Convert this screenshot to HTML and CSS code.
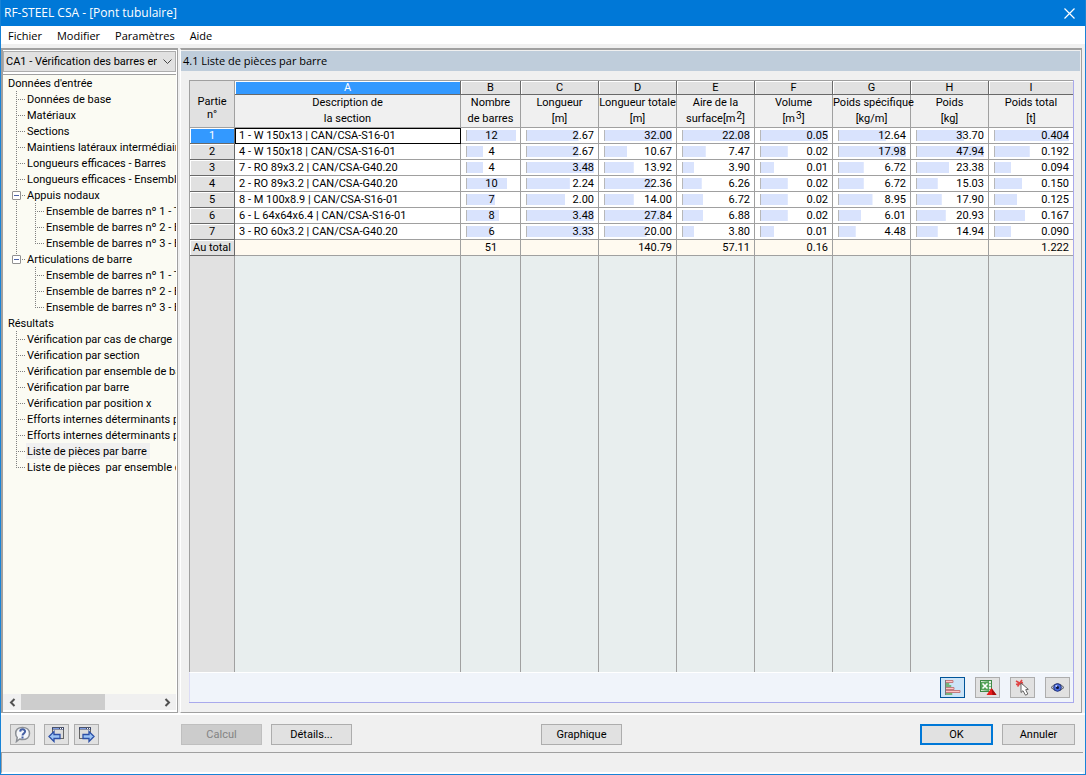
FILE: index.html
```html
<!DOCTYPE html>
<html lang="fr">
<head>
<meta charset="utf-8">
<title>RF-STEEL CSA - [Pont tubulaire]</title>
<link rel="stylesheet" href="styles.css">
</head>
<body>
<div class="window">
  <header class="titlebar">
    <h1 class="title">RF-STEEL CSA - [Pont tubulaire]</h1>
    <button class="close" type="button" aria-label="Fermer"><svg width="11" height="11" viewBox="0 0 11 11"><path d="M.5.5l10 10M10.500.5l-10 10" stroke="#fff" stroke-width="1.200" fill="none"/></svg></button>
  </header>
  <nav class="menubar">
    <button type="button">Fichier</button>
    <button type="button">Modifier</button>
    <button type="button">Paramètres</button>
    <button type="button">Aide</button>
  </nav>

  <div class="body">
    <aside class="sidebar">
      <select class="case" aria-label="Cas"><option>CA1 - Vérification des barres en acier</option></select>
      <div class="tree-box">
        <ul class="tree">
          <li><a href="#">Données d'entrée</a>
            <ul class="branch">
              <li><a href="#">Données de base</a></li>
              <li><a href="#">Matériaux</a></li>
              <li><a href="#">Sections</a></li>
              <li><a href="#">Maintiens latéraux intermédiaires</a></li>
              <li><a href="#">Longueurs efficaces - Barres</a></li>
              <li><a href="#">Longueurs efficaces - Ensembles de barres</a></li>
              <li><button class="expander" type="button" aria-label="Réduire"></button><a href="#">Appuis nodaux</a>
                <ul class="branch">
                  <li><a href="#">Ensemble de barres nº 1 - Treillis</a></li>
                  <li><a href="#">Ensemble de barres nº 2 - Ensemble</a></li>
                  <li><a href="#">Ensemble de barres nº 3 - Ensemble</a></li>
                </ul>
              </li>
              <li><button class="expander" type="button" aria-label="Réduire"></button><a href="#">Articulations de barre</a>
                <ul class="branch">
                  <li><a href="#">Ensemble de barres nº 1 - Treillis</a></li>
                  <li><a href="#">Ensemble de barres nº 2 - Ensemble</a></li>
                  <li><a href="#">Ensemble de barres nº 3 - Ensemble</a></li>
                </ul>
              </li>
            </ul>
          </li>
          <li><a href="#">Résultats</a>
            <ul class="branch">
              <li><a href="#">Vérification par cas de charge</a></li>
              <li><a href="#">Vérification par section</a></li>
              <li><a href="#">Vérification par ensemble de barres</a></li>
              <li><a href="#">Vérification par barre</a></li>
              <li><a href="#">Vérification par position x</a></li>
              <li><a href="#">Efforts internes déterminants par barre</a></li>
              <li><a href="#">Efforts internes déterminants par ensemble</a></li>
              <li><a href="#" class="selected">Liste de pièces par barre</a></li>
              <li><a href="#">Liste de pièces&nbsp; par ensemble de barres</a></li>
            </ul>
          </li>
        </ul>
        <div class="scrollbar">
          <button type="button" aria-label="Défiler à gauche"><svg width="7" height="9" viewBox="0 0 7 9"><path d="M5.500 1L2 4.500 5.500 8" stroke="#505050" stroke-width="2" fill="none"/></svg></button>
          <div class="track"><div class="thumb"></div></div>
          <button type="button" aria-label="Défiler à droite"><svg width="7" height="9" viewBox="0 0 7 9"><path d="M1.500 1L5 4.500 1.500 8" stroke="#505050" stroke-width="2" fill="none"/></svg></button>
        </div>
      </div>
    </aside>

    <main class="main">
      <h2 class="caption">4.1 Liste de pièces par barre</h2>
      <section class="grid">
        <div class="sheet">
          <table class="parts">
            <colgroup><col class="c-no"><col class="c-desc"><col class="c-count"><col class="c-num"><col class="c-num"><col class="c-num"><col class="c-num"><col class="c-num"><col class="c-num"><col></colgroup>
            <thead>
              <tr class="letters"><th rowspan="2" class="corner">Partie<br>n°</th><th class="active">A</th><th>B</th><th>C</th><th>D</th><th>E</th><th>F</th><th>G</th><th>H</th><th>I</th></tr>
              <tr class="names"><th>Description de<br>la section</th><th>Nombre<br>de barres</th><th>Longueur<br>[m]</th><th>Longueur totale<br>[m]</th><th>Aire de la<br>surface[m<sup>2</sup>]</th><th>Volume<br>[m<sup>3</sup>]</th><th>Poids spécifique<br>[kg/m]</th><th>Poids<br>[kg]</th><th>Poids total<br>[t]</th></tr>
            </thead>
            <tbody>
              <tr><th class="active">1</th><td class="desc focus">1 - W 150x13 | CAN/CSA-S16-01</td><td><div class="bar mid" style="--v:100%">12</div></td><td><div class="bar" style="--v:77%">2.67</div></td><td><div class="bar" style="--v:100%">32.00</div></td><td><div class="bar" style="--v:100%">22.08</div></td><td><div class="bar" style="--v:100%">0.05</div></td><td><div class="bar" style="--v:70%">12.64</div></td><td><div class="bar" style="--v:70%">33.70</div></td><td><div class="bar" style="--v:100%">0.404</div></td></tr>
              <tr><th>2</th><td class="desc">4 - W 150x18 | CAN/CSA-S16-01</td><td><div class="bar mid" style="--v:33%">4</div></td><td><div class="bar" style="--v:77%">2.67</div></td><td><div class="bar" style="--v:33%">10.67</div></td><td><div class="bar" style="--v:34%">7.47</div></td><td><div class="bar" style="--v:40%">0.02</div></td><td><div class="bar" style="--v:100%">17.98</div></td><td><div class="bar" style="--v:100%">47.94</div></td><td><div class="bar" style="--v:47%">0.192</div></td></tr>
              <tr><th>3</th><td class="desc">7 - RO 89x3.2 | CAN/CSA-G40.20</td><td><div class="bar mid" style="--v:33%">4</div></td><td><div class="bar" style="--v:100%">3.48</div></td><td><div class="bar" style="--v:43%">13.92</div></td><td><div class="bar" style="--v:17%">3.90</div></td><td><div class="bar" style="--v:20%">0.01</div></td><td><div class="bar" style="--v:37%">6.72</div></td><td><div class="bar" style="--v:48%">23.38</div></td><td><div class="bar" style="--v:22%">0.094</div></td></tr>
              <tr><th>4</th><td class="desc">2 - RO 89x3.2 | CAN/CSA-G40.20</td><td><div class="bar mid" style="--v:82%">10</div></td><td><div class="bar" style="--v:64%">2.24</div></td><td><div class="bar" style="--v:70%">22.36</div></td><td><div class="bar" style="--v:28%">6.26</div></td><td><div class="bar" style="--v:40%">0.02</div></td><td><div class="bar" style="--v:37%">6.72</div></td><td><div class="bar" style="--v:31%">15.03</div></td><td><div class="bar" style="--v:37%">0.150</div></td></tr>
              <tr><th>5</th><td class="desc">8 - M 100x8.9 | CAN/CSA-S16-01</td><td><div class="bar mid" style="--v:58%">7</div></td><td><div class="bar" style="--v:57%">2.00</div></td><td><div class="bar" style="--v:43%">14.00</div></td><td><div class="bar" style="--v:30%">6.72</div></td><td><div class="bar" style="--v:40%">0.02</div></td><td><div class="bar" style="--v:50%">8.95</div></td><td><div class="bar" style="--v:37%">17.90</div></td><td><div class="bar" style="--v:30%">0.125</div></td></tr>
              <tr><th>6</th><td class="desc">6 - L 64x64x6.4 | CAN/CSA-S16-01</td><td><div class="bar mid" style="--v:66%">8</div></td><td><div class="bar" style="--v:100%">3.48</div></td><td><div class="bar" style="--v:87%">27.84</div></td><td><div class="bar" style="--v:30%">6.88</div></td><td><div class="bar" style="--v:40%">0.02</div></td><td><div class="bar" style="--v:33%">6.01</div></td><td><div class="bar" style="--v:43%">20.93</div></td><td><div class="bar" style="--v:41%">0.167</div></td></tr>
              <tr><th>7</th><td class="desc">3 - RO 60x3.2 | CAN/CSA-G40.20</td><td><div class="bar mid" style="--v:50%">6</div></td><td><div class="bar" style="--v:95%">3.33</div></td><td><div class="bar" style="--v:62%">20.00</div></td><td><div class="bar" style="--v:17%">3.80</div></td><td><div class="bar" style="--v:20%">0.01</div></td><td><div class="bar" style="--v:25%">4.48</div></td><td><div class="bar" style="--v:31%">14.94</div></td><td><div class="bar" style="--v:22%">0.090</div></td></tr>
              <tr class="total"><th>Au total</th><td></td><td class="mid">51</td><td></td><td>140.79</td><td>57.11</td><td>0.16</td><td></td><td></td><td>1.222</td></tr>
              <tr class="filler"><th></th><td></td><td></td><td></td><td></td><td></td><td></td><td></td><td></td><td></td></tr>
            </tbody>
          </table>
        </div>
        <div class="tools">
          <button type="button" class="btn icon on" aria-label="Barres"><svg width="19" height="17" viewBox="0 0 19 17"><path d="M2.500 1v15" stroke="#777" fill="none"/><path d="M3 1.500h7v2H3M3 8.500h8v2H3M3 11.500h14v2H3" fill="#ffc4c4" stroke="#c27c80"/><path d="M3 4.500h3v1H3M3 6.500h5v1H3M3 14.500h6v1H3" fill="#c4f4c4" stroke="#74b47c"/></svg></button>
          <button type="button" class="btn icon" aria-label="Excel"><svg width="19" height="17" viewBox="0 0 19 17"><rect x="2.500" y="1.500" width="11" height="11" fill="#e4f0e2" stroke="#3f8a46"/><path d="M10 4.500h3M10 7.500h3M10 10.500h3" stroke="#7fb883"/><path d="M3 3l8-1v10l-8-1z" fill="#55a45a"/><path d="M4.500 4.500l5 5M9.500 4.500l-5 5" stroke="#fff" stroke-width="1.600"/><path d="M13.500 9l5 7h-10z" fill="#e81c1c"/><path d="M13.500 9l5 7h-4z" fill="#a80c0c"/></svg></button>
          <button type="button" class="btn icon" aria-label="Sélection"><svg width="19" height="17" viewBox="0 0 19 17"><path d="M3 2l7 4M9 1L4.500 7.500M3 5.500l7-2" stroke="#e04444" stroke-width="1.600"/><path d="M8 4v9.500l2-1.800 2.500 4.500 2.300-1.200-2.100-4.300 2.600-.4z" fill="#fff" stroke="#555" stroke-width=".9"/></svg></button>
          <button type="button" class="btn icon" aria-label="Afficher"><svg width="19" height="17" viewBox="0 0 19 17"><path d="M3 8.500Q9.500 1 16 8.500 9.500 15 3 8.500z" fill="#c4c8d0" stroke="#60646c"/><circle cx="9.500" cy="8.500" r="3.800" fill="#4668dc" stroke="#26367e"/><circle cx="9.500" cy="8.500" r="1.500" fill="#0c1234"/><circle cx="8.300" cy="7" r="1" fill="#c0d0ff"/></svg></button>
        </div>
      </section>
    </main>
  </div>

  <footer class="footer">
    <div class="nav">
      <button type="button" class="btn icon" aria-label="Aide"><svg width="19" height="17" viewBox="0 0 19 17"><path d="M9.500 1.500c4.300 0 7 2.500 7 6s-2.700 6-7 6c-1 0-2-.2-2.800-.5L3.500 15.500l.7-4C3.200 10.500 2.700 9 2.700 7.500c0-3.500 2.500-6 6.800-6z" fill="#f4f6fa" stroke="#8c9096" stroke-width="1.500"/><path d="M7.200 5.600c.1-3 5-3 4.900 0 0 1.800-2.600 1.800-2.600 4" fill="none" stroke="#4560a4" stroke-width="2"/><rect x="8.500" y="10.500" width="2" height="2" fill="#4560a4"/></svg></button>
      <button type="button" class="btn icon prev" aria-label="Précédent"><svg width="19" height="17" viewBox="0 0 19 17"><rect x="5.500" y="1.500" width="11" height="11" fill="#dcdcdc" stroke="#666"/><path d="M5 2.500h12" stroke="#35436e" stroke-width="2"/><path d="M6 2.500h6" stroke="#7d9be0"/><path d="M13 2.500h1M15 2.500h1" stroke="#fff"/><path d="M2 10.500l5-5v3h6v4H7v3z" fill="#9cc4f6" stroke="#2c4fa6" stroke-width="1.300"/></svg></button>
      <button type="button" class="btn icon" aria-label="Suivant"><svg width="19" height="17" viewBox="0 0 19 17"><rect x="2.500" y="1.500" width="11" height="11" fill="#dcdcdc" stroke="#666"/><path d="M2 2.500h12" stroke="#35436e" stroke-width="2"/><path d="M3 2.500h6" stroke="#7d9be0"/><path d="M10 2.500h1M12 2.500h1" stroke="#fff"/><path d="M17 10.500l-5-5v3H6v4h6v3z" fill="#9cc4f6" stroke="#2c4fa6" stroke-width="1.300"/></svg></button>
    </div>
    <button type="button" class="btn calc" disabled>Calcul</button>
    <button type="button" class="btn calc">Détails...</button>
    <button type="button" class="btn calc graph">Graphique</button>
    <div class="confirm">
      <button type="button" class="btn ok">OK</button>
      <button type="button" class="btn">Annuler</button>
    </div>
  </footer>
  <div class="status"></div>
</div>
</body>
</html>
```
FILE: styles.css
```css
* { box-sizing: border-box; }
html, body { height: 100%; margin: 0; }
body { font: 11px/16px Roboto, "Noto Sans", sans-serif; color: #000; background: #f0f0f0; }
button, select { font: inherit; color: inherit; }
button { padding: 0; border: 0; background: none; }
svg { display: block; }

.window { display: flex; flex-direction: column; height: 100vh; overflow: hidden; border: 1px solid #1883d7; border-top: 0; }

.titlebar { display: flex; flex: none; justify-content: space-between; align-items: center; height: 26px; padding: 0 10px 0 3px; background: #0078d7; color: #fff; font-family: "Open Sans", sans-serif; }
.title { margin: 0; font-size: 12px; font-weight: 400; }

.menubar { display: flex; flex: none; gap: 15px; height: 18px; padding: 2px 7px 0; background: #fff; font-family: "Open Sans", sans-serif; }
.menubar button { line-height: 16px; }

.body { display: flex; flex: 1; min-height: 0; margin-top: 4px; border-bottom: 2px solid #fff; }

.sidebar { display: flex; flex: none; flex-direction: column; width: 177px; border: solid #a0a0a0; border-width: 2px 1px 1px 2px; background: #fff; padding: 1px 1px 2px 0; }
.case { flex: none; height: 21px; padding: 1px 18px 0 2px; border: 1px solid #adadad; border-radius: 0; appearance: none; color: #000; text-overflow: clip;
  background: #e1e1e1 url("data:image/svg+xml,%3Csvg xmlns='http://www.w3.org/2000/svg' width='9' height='6'%3E%3Cpath d='M.5.5l4 4 4-4' fill='none' stroke='%23444'/%3E%3C/svg%3E") no-repeat right 3px center; }
.tree-box { display: flex; flex: 1; flex-direction: column; min-height: 0; margin-top: 2px; border-top: 1px solid #a0a0a0; background: #fbfbf3; }

.tree, .branch { margin: 0; padding: 0; list-style: none; }
.tree { flex: 1; min-height: 0; overflow: hidden; padding-left: 4px; white-space: nowrap; }
.tree a { display: inline-block; height: 16px; line-height: 18px; padding: 0 3px 0 1px; color: #000; text-decoration: none; vertical-align: top; }
.tree a.selected { background: #f0f0f0; }
.branch { margin-left: 9px; }
.branch li { position: relative; padding-left: 10px;
  background:
    repeating-linear-gradient(#808080 0 1px, transparent 1px 2px) 0 0 / 1px 100% no-repeat,
    repeating-linear-gradient(90deg, #808080 0 1px, transparent 1px 2px) 0 8px / 9px 1px no-repeat; }
.branch li:last-child { background-size: 1px 9px, 9px 1px; }
.expander { position: absolute; left: -4px; top: 4px; width: 9px; height: 9px; border: 1px solid #919191; border-radius: 1px; background: linear-gradient(#4b63a7, #4b63a7) center / 5px 1px no-repeat #fff; }

.scrollbar { display: flex; flex: none; height: 16px; background: #f0f0f0; }
.scrollbar button { display: flex; flex: none; justify-content: center; align-items: center; width: 18px; }
.track { flex: 1; }
.thumb { width: 61%; height: 100%; background: #cdcdcd; }

.main { display: flex; flex: 1; flex-direction: column; min-width: 0; margin: 0 3px 0 2px; padding: 1px 1px 9px 0; border: solid #a0a0a0; border-width: 2px 1px 1px 0; border-left: 1px solid #fff; }
.caption { flex: none; height: 20px; margin: 0; padding: 0 2px; background: #bfcddb; font-family: "Open Sans", sans-serif; font-size: 11px; line-height: 20px; font-weight: 400; }
.grid { display: flex; flex: 1; flex-direction: column; min-height: 0; margin: 9px 6px 0 8px; border-right: 1px solid #a9a9ec; border-bottom: 1px solid #a9a9ec; }
.sheet { flex: 1; min-height: 0; background: #e8eeee; }

.parts { width: 100%; height: 100%; table-layout: fixed; border-collapse: separate; border-spacing: 0; border: solid #a0a0a0; border-width: 1px 0 0 1px; font-size: 11px; line-height: 15px; }
.c-no { width: 45px; }
.c-desc { width: 226px; }
.c-count { width: 60px; }
.c-num { width: 78px; }
.parts th, .parts td { height: 16px; padding: 0; border: solid #a0a0a0; border-width: 0 1px 1px 0; font-weight: 400; white-space: nowrap; }
.parts td { padding: 0 4px 0 5px; background: #fff; text-align: right; }
.parts tr > :last-child { border-right: 0; }
.parts th { background: #e1e1e1; }
.parts tbody th, .parts .letters th { border-right-color: #696969; border-bottom-color: #696969; box-shadow: inset 1px 1px #fff; }
.parts .letters th { height: 14px; line-height: 13px; }
.parts .names th { height: 33px; line-height: 16px; background: #f0f0f0; }
.parts .letters .corner { line-height: 13px; padding-top: 8px; border-color: #a0a0a0; box-shadow: none; }
.parts th.active { background: #3399ff; color: #fff; }
.parts td.desc { padding: 0 4px; text-align: left; }
.parts td.focus { outline: 1px solid #000; outline-offset: -1px; }
.parts td.mid, .bar.mid { text-align: center; }
.parts .total td { background: #fffaf0; }
.parts .filler th, .parts .filler td { height: auto; border-bottom: 0; box-shadow: none; }
.parts .filler th { border-right-color: #a0a0a0; }
.parts .filler td { background: #e8eeee; }
.parts sup { font-size: 10px; line-height: 0; vertical-align: 3px; margin-left: 1px; }
.bar { height: 11px; line-height: 11px; border-left: 1px solid #b8b8b8; background: linear-gradient(#d9e3fd, #d9e3fd) no-repeat 0 0 / var(--v) 100%; }

.tools { display: flex; flex: none; justify-content: flex-end; gap: 10px; padding: 4px 3px 4px 0; border-top: 1px solid #fff; border-left: 1px solid #dcdcf5; background: #f0f4fa; }

.btn { height: 21px; border: 1px solid #adadad; background: #e1e1e1; color: #000; min-width: 73px; }
.btn.icon { display: flex; justify-content: center; align-items: center; min-width: 25px; width: 25px; }
.btn.on { border-color: #005499; background: #cce4f7; }
.btn:disabled { background: #cccccc; border-color: #bfbfbf; color: #838383; }
.btn.ok { border: 2px solid #0078d7; }

.footer { display: flex; flex: none; gap: 9px; padding: 9px 10px 7px 9px; height: 37px; }
.nav { display: flex; gap: 5px; width: 162px; }
.prev { margin-left: 4px; }
.calc { width: 81px; }
.graph { margin-left: 180px; }
.confirm { display: flex; gap: 9px; margin-left: auto; }

.status { flex: none; height: 22px; border: solid #a0a0a0; border-width: 1px 0 0 1px; border-bottom: 2px solid #fff; margin-right: 2px; }
```
